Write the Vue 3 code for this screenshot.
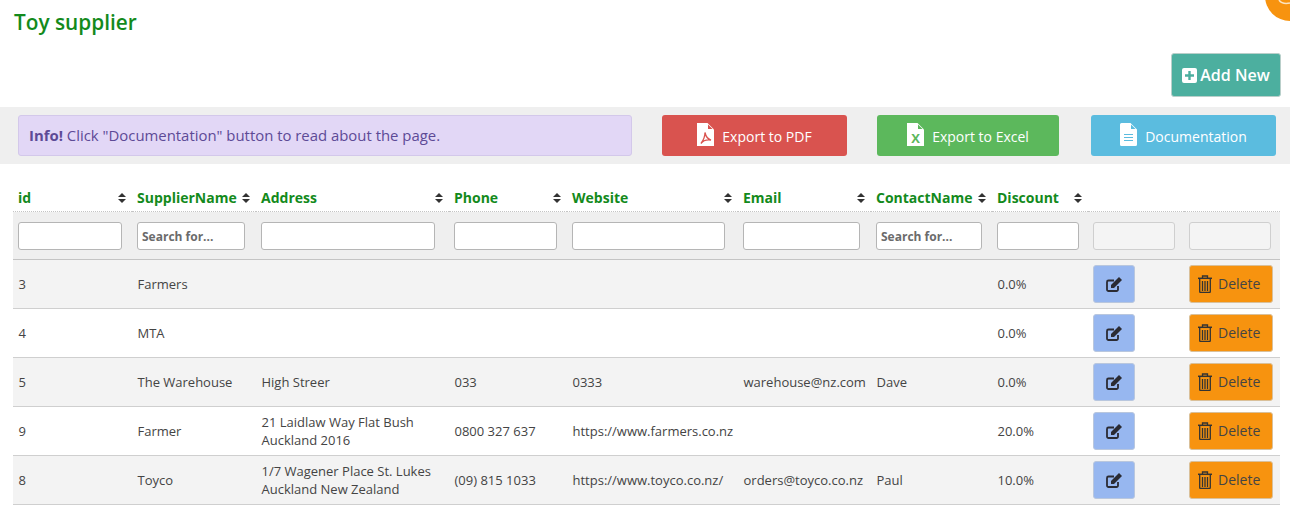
<script setup>
const columns = [
  { label: 'id', width: 119, input: 104 },
  { label: 'SupplierName', width: 124, input: 108, placeholder: 'Search for...' },
  { label: 'Address', width: 193, input: 174 },
  { label: 'Phone', width: 118, input: 103 },
  { label: 'Website', width: 171, input: 153 },
  { label: 'Email', width: 133, input: 117 },
  { label: 'ContactName', width: 121, input: 106, placeholder: 'Search for...' },
  { label: 'Discount', width: 96, input: 82 },
]

const suppliers = [
  { id: 3, name: 'Farmers', address: [], phone: '', website: '', email: '', contact: '', discount: '0.0%' },
  { id: 4, name: 'MTA', address: [], phone: '', website: '', email: '', contact: '', discount: '0.0%' },
  { id: 5, name: 'The Warehouse', address: ['High Streer'], phone: '033', website: '0333', email: 'warehouse@nz.com', contact: 'Dave', discount: '0.0%' },
  { id: 9, name: 'Farmer', address: ['21 Laidlaw Way Flat Bush', 'Auckland 2016'], phone: '0800 327 637', website: 'https://www.farmers.co.nz', email: '', contact: '', discount: '20.0%' },
  { id: 8, name: 'Toyco', address: ['1/7 Wagener Place St. Lukes', 'Auckland New Zealand'], phone: '(09) 815 1033', website: 'https://www.toyco.co.nz/', email: 'orders@toyco.co.nz', contact: 'Paul', discount: '10.0%' },
]
</script>

<template>
  <div class="page">
    <div class="corner">
      <svg width="25" height="21" viewBox="0 0 25 21"><path fill="none" stroke="#fbe3c0" stroke-width="1.500" d="M14 0c2 3 6 4 11 3"/></svg>
    </div>
    <h1 class="title">Toy supplier</h1>

    <div class="add-row">
      <button class="add-btn">
        <svg width="15" height="15" viewBox="0 0 15 15"><path fill="#fff" fill-rule="evenodd" d="M2 0h11a2 2 0 0 1 2 2v11a2 2 0 0 1-2 2H2a2 2 0 0 1-2-2V2a2 2 0 0 1 2-2zm4.300 3v3.300H3v2.400h3.300V12h2.400V8.700H12V6.300H8.700V3z"/></svg>
        Add New
      </button>
    </div>

    <div class="toolbar">
      <div class="info"><strong>Info!</strong> Click "Documentation" button to read about the page.</div>
      <button class="tool-btn pdf">
        <svg width="17" height="23" viewBox="0 0 17 23">
          <path fill="#fff" d="M0 0h10.500L17 6.500V23H0z"/>
          <path fill="#d9534f" d="M11 1.500L15.500 6H11z"/>
          <path fill="none" stroke="#d9534f" stroke-width="1.300" d="M8 9.500c.8 4 2.500 6.500 6 7.500-4-.5-8 .5-10 3.500 2.200-3 4-6.500 4-11z"/>
        </svg>
        <span>Export to PDF</span>
      </button>
      <button class="tool-btn excel">
        <svg width="17" height="23" viewBox="0 0 17 23">
          <path fill="#fff" d="M0 0h10.500L17 6.500V23H0z"/>
          <path fill="#5cb85c" d="M11 1.500L15.500 6H11z"/>
          <text x="8.500" y="19.500" text-anchor="middle" class="x-mark">X</text>
        </svg>
        <span>Export to Excel</span>
      </button>
      <button class="tool-btn docs">
        <svg width="17" height="23" viewBox="0 0 17 23">
          <path fill="#fff" d="M0 1.500A1.500 1.500 0 0 1 1.500 0h9L17 6.500v15a1.500 1.500 0 0 1-1.500 1.500h-14A1.500 1.500 0 0 1 0 21.500z"/>
          <path fill="#5bbcdf" d="M11 1.500L15.500 6H11z"/>
          <path stroke="#5bbcdf" stroke-width="1.200" d="M4 11.500h9M4 14.500h9M4 17.500h9"/>
        </svg>
        <span>Documentation</span>
      </button>
    </div>

    <table class="grid">
      <colgroup>
        <col v-for="c in columns" :key="c.label" :style="{ width: c.width + 'px' }">
        <col style="width: 96px">
        <col style="width: 96px">
      </colgroup>
      <thead>
        <tr class="heads">
          <th v-for="c in columns" :key="c.label">
            <div class="head-cell">
              <span>{{ c.label }}</span>
              <svg class="sort" width="8" height="10" viewBox="0 0 8 10"><path fill="#333" d="M4 0l4 4H0zM4 10L0 6h8z"/></svg>
            </div>
          </th>
          <th></th>
          <th></th>
        </tr>
        <tr class="filters">
          <td v-for="c in columns" :key="c.label">
            <input type="text" :placeholder="c.placeholder" :style="{ width: c.input + 'px' }">
          </td>
          <td><input type="text" disabled></td>
          <td><input type="text" disabled></td>
        </tr>
      </thead>
      <tbody>
        <tr v-for="s in suppliers" :key="s.id">
          <td>{{ s.id }}</td>
          <td>{{ s.name }}</td>
          <td><div v-for="line in s.address" :key="line">{{ line }}</div></td>
          <td>{{ s.phone }}</td>
          <td>{{ s.website }}</td>
          <td>{{ s.email }}</td>
          <td>{{ s.contact }}</td>
          <td>{{ s.discount }}</td>
          <td>
            <button class="edit-btn">
              <svg width="16" height="15" viewBox="0 0 16 15">
                <path fill="none" stroke="#2b2b33" stroke-width="1.800" d="M8 3.500H2.500A1.500 1.500 0 0 0 1 5v7.500A1.500 1.500 0 0 0 2.500 14h8a1.500 1.500 0 0 0 1.500-1.500V9"/>
                <path fill="#2b2b33" d="M13 0l3 3-8 8H5V8z"/>
              </svg>
            </button>
          </td>
          <td>
            <button class="delete-btn">
              <svg width="14" height="18" viewBox="0 0 14 18">
                <path fill="none" stroke="#333" stroke-width="1.300" d="M4.500 3V1h5v2"/>
                <path stroke="#333" stroke-width="1.500" d="M0 3.300h14"/>
                <path fill="none" stroke="#333" stroke-width="1.300" d="M1.700 4v12.500a1 1 0 0 0 1 1h8.600a1 1 0 0 0 1-1V4"/>
                <path stroke="#333" stroke-width="1.300" d="M4.500 6v10M7 6v10M9.500 6v10"/>
              </svg>
              <span>Delete</span>
            </button>
          </td>
        </tr>
      </tbody>
    </table>
  </div>
</template>

<style scoped>
.page {
  position: relative;
  height: 507px;
  overflow: hidden;
  background: #fff;
  font-family: "Open Sans", sans-serif;
  color: #444;
}

.corner {
  position: absolute;
  top: -29px;
  right: -25px;
  width: 50px;
  height: 50px;
  border-radius: 50%;
  background: #f7930f;
}

.corner svg {
  position: absolute;
  top: 29px;
  left: 0;
}

.title {
  margin: 0;
  padding: 8px 14px 0;
  height: 53px;
  box-sizing: border-box;
  font-size: 20.800px;
  line-height: 28px;
  font-weight: 600;
  color: #138a1c;
}

.add-row {
  display: flex;
  justify-content: flex-end;
  padding-right: 9px;
  height: 54px;
}

.add-btn {
  display: flex;
  align-items: center;
  justify-content: center;
  gap: 3px;
  width: 110px;
  height: 44px;
  padding: 0;
  border: 1px solid #b9cfca;
  border-radius: 3px;
  background: #4caf9f;
  color: #fff;
  font: 600 16px "Open Sans", sans-serif;
}

.toolbar {
  display: flex;
  align-items: flex-start;
  height: 57px;
  padding-top: 8px;
  box-sizing: border-box;
  background: #efefef;
}

.info {
  width: 614px;
  height: 41px;
  margin-left: 18px;
  box-sizing: border-box;
  padding-left: 10px;
  border: 1px solid #d3c8ea;
  border-radius: 3px;
  background: #e2d7f6;
  color: #5d4a96;
  font-size: 14.900px;
  line-height: 39px;
}

.info strong {
  font-weight: 700;
}

.tool-btn {
  display: flex;
  align-items: center;
  justify-content: center;
  gap: 8px;
  height: 41px;
  padding: 0;
  border: 0;
  border-radius: 3px;
  color: #fff;
  font: 400 14px "Open Sans", sans-serif;
}

.tool-btn span {
  margin-top: 2px;
}

.tool-btn svg {
  margin-top: -3px;
}

.pdf {
  width: 185px;
  margin-left: 30px;
  background: #d9534f;
}

.excel {
  width: 182px;
  margin-left: 30px;
  background: #5cb85c;
}

.docs {
  width: 185px;
  margin-left: 32px;
  background: #5bbcdf;
}

.x-mark {
  font: 700 13px "Open Sans", sans-serif;
  fill: #5cb85c;
}

.grid {
  width: 1267px;
  margin: 22px 0 0 13px;
  table-layout: fixed;
  border-collapse: separate;
  border-spacing: 0;
  font-size: 13px;
}

.heads th {
  height: 26px;
  padding: 0 5px 2px;
  box-sizing: border-box;
  border-bottom: 1px dotted #c4c4c4;
  text-align: left;
  font-size: 14px;
  font-weight: 700;
  color: #138a1c;
}

.head-cell {
  display: flex;
  align-items: center;
  justify-content: space-between;
  padding-right: 1px;
}

.sort {
  flex: none;
}

.filters td {
  height: 48px;
  padding: 0 0 0 5px;
  box-sizing: border-box;
  border-bottom: 1px solid #c4c4c4;
  background: #efefef;
}

.filters input {
  display: block;
  height: 28px;
  box-sizing: border-box;
  padding: 1px 4px 0;
  border: 1px solid #b5b5b5;
  border-radius: 3px;
  background: #fff;
  font: 700 12px "Open Sans", sans-serif;
}

.filters input::placeholder {
  color: #6b6b6b;
  opacity: 1;
}

.filters input:disabled {
  width: 82px;
  border-color: #cfcfcf;
  background: #f4f4f4;
}

tbody td {
  height: 49px;
  padding: 0 5px 0 5.500px;
  box-sizing: border-box;
  border-bottom: 1px solid #cfcfcf;
  line-height: 18px;
  vertical-align: middle;
  white-space: nowrap;
}

tbody tr:nth-child(odd) td {
  background: #f3f3f3;
}

tbody td:last-child,
tbody td:nth-last-child(2) {
  padding-left: 5px;
}

.edit-btn {
  display: flex;
  align-items: center;
  justify-content: center;
  width: 42px;
  height: 38px;
  padding: 0;
  border: 1px solid #b9c7de;
  border-radius: 3px;
  background: #97b7f0;
}

.delete-btn {
  display: flex;
  align-items: center;
  gap: 6px;
  width: 84px;
  height: 38px;
  padding: 0 0 0 8px;
  box-sizing: border-box;
  border: 1px solid #d9c09a;
  border-radius: 3px;
  background: #f7930f;
  color: #444;
  font: 400 14px "Open Sans", sans-serif;
}

.delete-btn span {
  margin-top: -2px;
}
</style>
